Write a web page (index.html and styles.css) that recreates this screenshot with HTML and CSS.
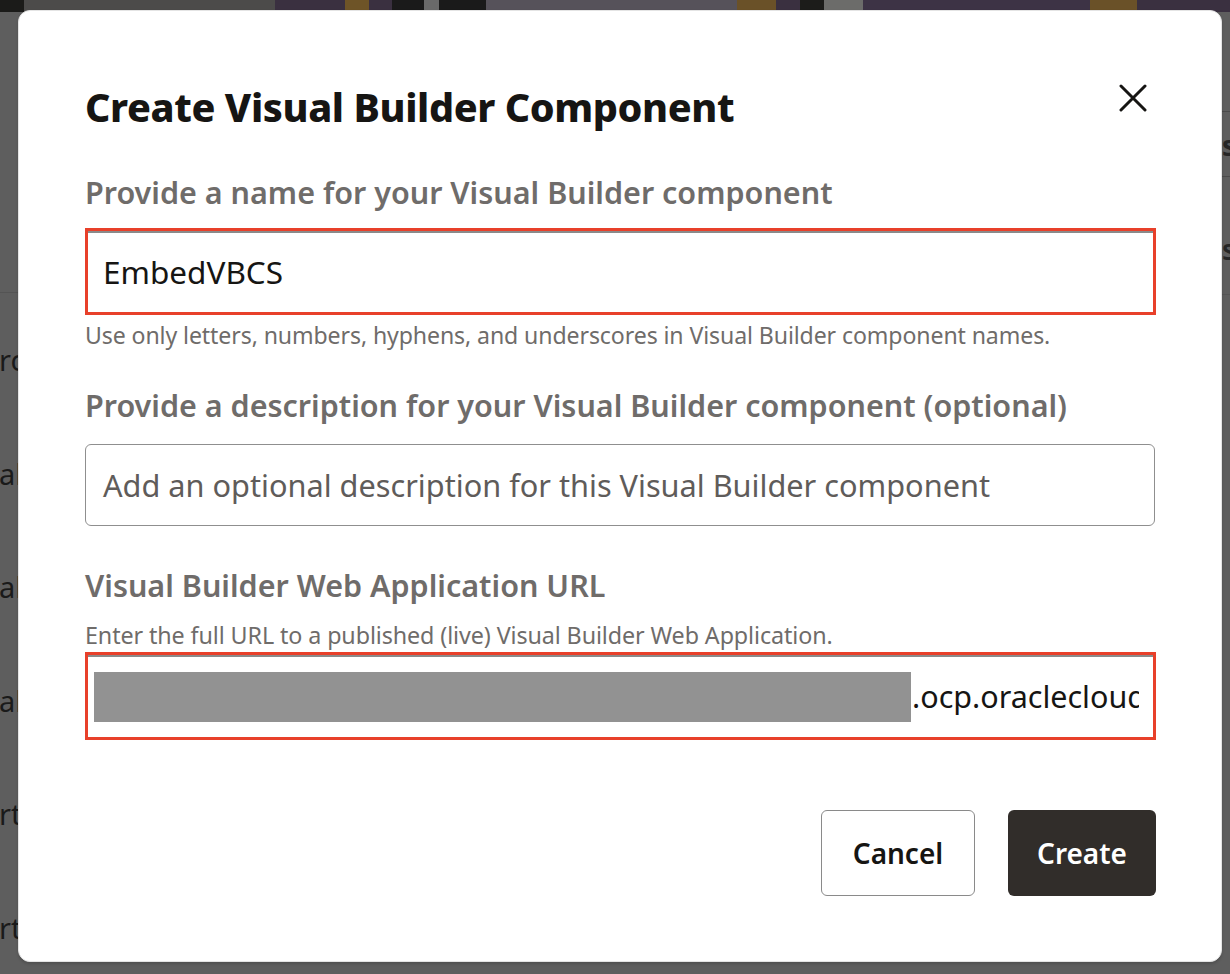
FILE: index.html
```html
<!DOCTYPE html>
<html lang="en">
<head>
<meta charset="utf-8">
<title>Create Visual Builder Component</title>
<link rel="stylesheet" href="styles.css">
</head>
<body>
<div class="backdrop">
  <div class="topstrip"></div>
  <div class="app">
    <div class="side-left">
      <div class="left-head"></div>
      <ul class="left-list">
        <li>rc</li>
        <li>al</li>
        <li>al</li>
        <li>al</li>
        <li>rt</li>
        <li>rt</li>
      </ul>
    </div>
    <div class="side-right">
      <div class="rrow rrow-a"></div>
      <div class="rrow rrow-b">s</div>
      <div class="rrow rrow-c">s</div>
    </div>
  </div>
</div>

<div class="dialog" role="dialog" aria-labelledby="dlg-title">
  <div class="dlg-head">
    <h1 id="dlg-title" class="dlg-title">Create Visual Builder Component</h1>
    <button class="close-btn" aria-label="Close">
      <svg width="28" height="28" viewBox="0 0 28 28"><path d="M2 2 L26 26 M26 2 L2 26" stroke="#161513" stroke-width="3" stroke-linecap="round" fill="none"/></svg>
    </button>
  </div>

  <label class="field-label label-1">Provide a name for your Visual Builder component</label>
  <div class="input input-hl input-name"><span class="value">EmbedVBCS</span></div>
  <div class="hint hint-1">Use only letters, numbers, hyphens, and underscores in Visual Builder component names.</div>

  <label class="field-label label-2">Provide a description for your Visual Builder component (optional)</label>
  <div class="input input-desc"><span class="placeholder">Add an optional description for this Visual Builder component</span></div>

  <label class="field-label label-3">Visual Builder Web Application URL</label>
  <div class="hint hint-3">Enter the full URL to a published (live) Visual Builder Web Application.</div>
  <div class="input input-hl input-url"><div class="url-clip"><span class="redact"></span><span class="value">.ocp.oraclecloud.com/ic/builder/rt/app/live/webApps/</span></div></div>

  <div class="actions">
    <button class="btn btn-cancel">Cancel</button>
    <button class="btn btn-create">Create</button>
  </div>
</div>
</body>
</html>
```

FILE: styles.css
```css
* { box-sizing: border-box; }
html, body {
  margin: 0;
  padding: 0;
  width: 1230px;
  height: 974px;
  overflow: hidden;
  background: #5e5e5e;
  font-family: "Noto Sans", "Open Sans", sans-serif;
}

.backdrop {
  width: 1230px;
  height: 974px;
  display: flex;
  flex-direction: column;
}
.topstrip {
  height: 13px;
  background: linear-gradient(to right,
    #1b1b19 0, #1b1b19 24px,
    #4c4b4a 24px, #4c4b4a 275px,
    #3a3040 275px, #3a3040 345px,
    #6e5427 345px, #6e5427 369px,
    #3a3040 369px, #3a3040 392px,
    #1a1a1a 392px, #1a1a1a 424px,
    #6a6a6a 424px, #6a6a6a 439px,
    #1a1a1a 439px, #1a1a1a 486px,
    #56525a 486px, #56525a 737px,
    #6a5128 737px, #6a5128 776px,
    #3a3040 776px, #3a3040 800px,
    #1c1c1a 800px, #1c1c1a 824px,
    #6c6c6a 824px, #6c6c6a 863px,
    #3d3345 863px, #3d3345 1090px,
    #6a5128 1090px, #6a5128 1137px,
    #3a3040 1137px, #3a3040 1230px);
}
.app {
  flex: 1;
  display: flex;
  justify-content: space-between;
  background: #5e5e5e;
}
.side-left {
  width: 200px;
  overflow: hidden;
}
.left-head {
  height: 281px;
  border-bottom: 1px solid #545454;
}
.left-list {
  list-style: none;
  margin: 0;
  padding: 0;
  margin-left: -1px;
  color: #1a1a1a;
  font-size: 29px;
  white-space: nowrap;
}
.left-list li {
  height: 113.5px;
  line-height: 40px;
  padding-top: 47px;
}
.side-right {
  width: 200px;
  display: flex;
  flex-direction: column;
  padding-left: 192px;
  overflow: hidden;
}
.rrow {
  color: #262626;
  font-size: 28px;
  font-weight: 700;
  line-height: 40px;
  white-space: nowrap;
}
.rrow-a { height: 87px; border-bottom: 1px solid #4a4a4a; margin-top: 13px; }
.rrow-b { height: 65px; border-bottom: 1px solid #4a4a4a; padding-top: 13px; }
.rrow-c { height: 118px; border-bottom: 1px solid #555; padding-top: 52px; font-weight: 600; }

.dialog {
  position: absolute;
  left: 18px;
  top: 10px;
  width: 1204px;
  height: 952px;
  background: #ffffff;
  border-radius: 12px;
  border: 1px solid #e4e4e4;
  box-shadow: 0 2px 3px rgba(0,0,0,0.15);
  padding: 72px 65px 0 66px;
  display: flex;
  flex-direction: column;
}

.dlg-head {
  display: flex;
  justify-content: space-between;
  align-items: center;
  height: 48px;
}
.dlg-title {
  margin: 0;
  font-size: 39.5px;
  line-height: 48px;
  font-weight: 800;
  color: #161513;
  letter-spacing: -0.4px;
}
.close-btn {
  border: 0;
  background: transparent;
  padding: 0;
  width: 28px;
  height: 28px;
  margin-right: 9px;
  margin-top: -18px;
  display: flex;
}

.field-label {
  display: block;
  font-size: 30.5px;
  line-height: 40px;
  font-weight: 600;
  color: #6f6c6a;
}
.label-1 { margin-top: 41px; }
.label-2 { margin-top: 36px; }
.label-3 { margin-top: 39px; }

.input {
  width: 1071px;
  display: flex;
  align-items: center;
  font-size: 30.5px;
  white-space: nowrap;
  overflow: hidden;
}
.input-hl {
  border: 3px solid #e8402a;
  box-shadow: inset 0 2px 0 #8a8a8a;
  padding-left: 15px;
}
.input-name {
  height: 87px;
  margin-top: 16px;
  color: #161513;
}
.input-name .value { font-size: 31.5px; }
.input-desc {
  height: 82px;
  margin-top: 19px;
  border: 1.5px solid #8f8f8f;
  border-radius: 6px;
  padding-left: 17px;
  width: 1070px;
}
.placeholder { color: #5f5c5a; font-size: 30.7px; }
.input-url {
  height: 88px;
  margin-top: 3px;
  padding-left: 6px;
  padding-right: 14px;
  color: #161513;
}
.url-clip {
  flex: 1;
  min-width: 0;
  display: flex;
  align-items: center;
  overflow: hidden;
}
.redact {
  flex: none;
  width: 817px;
  height: 50px;
  background: #929292;
  margin-top: 2px;
}
.url-clip .value { flex: none; margin-left: 1px; }

.hint {
  font-size: 23.1px;
  line-height: 28px;
  color: #6f6c6a;
  letter-spacing: -0.1px;
}
.hint-1 { margin-top: 6px; }
.hint-3 { margin-top: 16px; font-size: 23.3px; }

.actions {
  margin-top: 70px;
  display: flex;
  justify-content: flex-end;
  gap: 33px;
  width: 1071px;
}
.btn {
  height: 86px;
  border-radius: 6px;
  font-family: "Noto Sans", "Open Sans", sans-serif;
  font-size: 28px;
  font-weight: 600;
  padding: 0;
}
.btn-cancel {
  width: 154px;
  background: #ffffff;
  border: 1.5px solid #8a8a8a;
  color: #161513;
}
.btn-create {
  width: 148px;
  background: #312d2a;
  border: 0;
  color: #ffffff;
}
```
